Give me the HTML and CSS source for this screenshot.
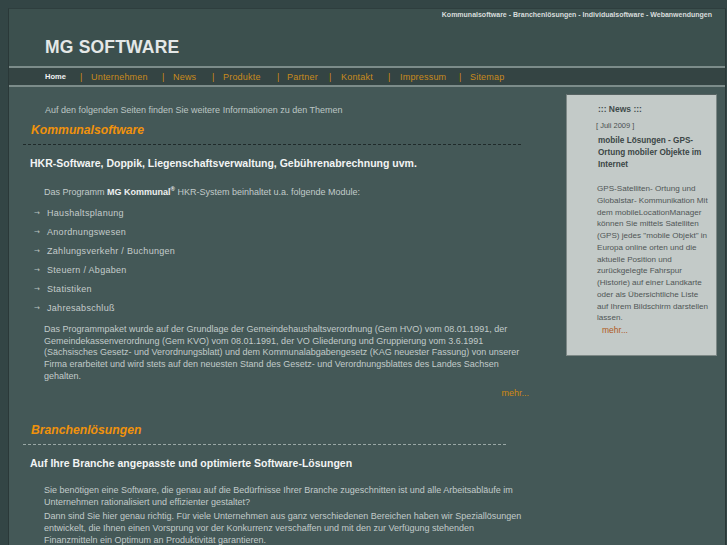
FILE: index.html
```html
<!DOCTYPE html>
<html lang="de">
<head>
<meta charset="utf-8">
<title>MG Software</title>
<link rel="stylesheet" href="styles.css">
</head>
<body>
<div class="page">
  <header class="header">
    <div class="tagline">Kommunalsoftware - Branchenlösungen - Individualsoftware - Webanwendungen</div>
    <div class="logo">MG SOFTWARE</div>
  </header>
  <nav class="nav">
    <span class="home">Home</span>
    <span class="item i1"><span class="sep">|</span><a>Unternehmen</a></span>
    <span class="item i2"><span class="sep">|</span><a>News</a></span>
    <span class="item i3"><span class="sep">|</span><a>Produkte</a></span>
    <span class="item i4"><span class="sep">|</span><a>Partner</a></span>
    <span class="item i5"><span class="sep">|</span><a>Kontakt</a></span>
    <span class="item i6"><span class="sep">|</span><a>Impressum</a></span>
    <span class="item i7"><span class="sep">|</span><a>Sitemap</a></span>
  </nav>
  <div class="main">
    <div class="content">
      <p class="intro">Auf den folgenden Seiten finden Sie weitere Informationen zu den Themen</p>

      <h2 class="section-title">Kommunalsoftware</h2>
      <div class="rule dark"></div>
      <h3 class="subtitle">HKR-Software, Doppik, Liegenschaftsverwaltung, Gebührenabrechnung uvm.</h3>
      <p class="text lead">Das Programm <b>MG Kommunal<sup>®</sup></b> HKR-System beinhaltet u.a. folgende Module:</p>
      <ul class="list">
        <li>Haushaltsplanung</li>
        <li>Anordnungswesen</li>
        <li>Zahlungsverkehr / Buchungen</li>
        <li>Steuern / Abgaben</li>
        <li>Statistiken</li>
        <li>Jahresabschluß</li>
      </ul>
      <p class="text after-list">Das Programmpaket wurde auf der Grundlage der Gemeindehaushaltsverordnung (Gem HVO) vom 08.01.1991, der Gemeindekassenverordnung (Gem KVO) vom 08.01.1991, der VO Gliederung und Gruppierung vom 3.6.1991 (Sächsisches Gesetz- und Verordnungsblatt) und dem Kommunalabgabengesetz (KAG neuester Fassung) von unserer Firma erarbeitet und wird stets auf den neuesten Stand des Gesetz- und Verordnungsblattes des Landes Sachsen gehalten.</p>
      <div class="more"><a>mehr...</a></div>

      <h2 class="section-title second">Branchenlösungen</h2>
      <div class="rule light"></div>
      <h3 class="subtitle">Auf Ihre Branche angepasste und optimierte Software-Lösungen</h3>
      <p class="text lead2">Sie benötigen eine Software, die genau auf die Bedürfnisse Ihrer Branche zugeschnitten ist und alle Arbeitsabläufe im Unternehmen rationalisiert und effizienter gestaltet?</p>
      <p class="text para">Dann sind Sie hier genau richtig. Für viele Unternehmen aus ganz verschiedenen Bereichen haben wir Speziallösungen entwickelt, die Ihnen einen Vorsprung vor der Konkurrenz verschaffen und mit den zur Verfügung stehenden Finanzmitteln ein Optimum an Produktivität garantieren.</p>
    </div>
    <aside class="sidebar">
      <div class="news-head">::: News :::</div>
      <div class="news-date">[ Juli 2009 ]</div>
      <div class="news-title">mobile Lösungen - GPS-Ortung mobiler Objekte im Internet</div>
      <p class="news-text">GPS-Satelliten- Ortung und Globalstar- Kommunikation Mit dem mobileLocationManager können Sie mittels Satelliten (GPS) jedes "mobile Objekt" in Europa online orten und die aktuelle Position und zurückgelegte Fahrspur (Historie) auf einer Landkarte oder als Übersichtliche Liste auf Ihrem Bildschirm darstellen lassen.</p>
      <div class="news-more"><a>mehr...</a></div>
    </aside>
  </div>
</div>
</body>
</html>
```

FILE: styles.css
```css
html, body {
  margin: 0;
  padding: 0;
}
body {
  background: #334545;
  padding: 8px 0 0 8px;
  font-family: "Liberation Sans", Arial, Helvetica, sans-serif;
  color: #c4cccb;
}
.page {
  width: 716px;
  border-left: 1px solid #2a3838;
  border-right: 1px solid #2a3838;
  border-top: 1px solid #2e3e3e;
  background: #445857;
  min-height: 600px;
}
.header {
  background: #3c504e;
  height: 57px;
}
.tagline {
  text-align: right;
  font-size: 7px;
  font-weight: bold;
  color: #d8dddc;
  padding: 2px 13px 0 0;
}
.logo {
  padding: 19px 0 0 36px;
  font-size: 17.5px;
  font-weight: bold;
  color: #e4e8e7;
  letter-spacing: 0.2px;
}
.nav {
  background: #344443;
  border-top: 2px solid #7c8c8a;
  border-bottom: 2px solid #7c8c8a;
  height: 17px;
  line-height: 18px;
  padding-left: 36px;
  font-size: 9px;
  display: flex;
  align-items: center;
}
.nav .home {
  color: #f2f2f2;
  font-size: 7.5px;
  font-weight: bold;
  width: 35px;
}
.nav .item {
  display: flex;
}
.nav .i1 { width: 82px; }
.nav .i2 { width: 50px; }
.nav .i3 { width: 65px; }
.nav .i4 { width: 52px; }
.nav .i5 { width: 59px; }
.nav .i6 { width: 71px; }
.nav .sep {
  color: #d08a12;
  width: 11px;
}
.nav .i4 .sep {
  width: 10px;
}
.nav .i5 .sep, .nav .i6 .sep {
  width: 12px;
}
.nav a {
  color: #c98a1c;
  letter-spacing: 0.2px;
}
.main {
  display: flex;
  align-items: flex-start;
}
.content {
  width: 506px;
  margin-left: 14px;
  padding-top: 18px;
}
.intro {
  margin: 0 0 0 22px;
  font-size: 9px;
  color: #bcc6c4;
}
.section-title {
  margin: 7px 0 0 8px;
  font-size: 12.2px;
  font-style: italic;
  font-weight: bold;
  color: #f0920c;
  line-height: 16px;
}
.section-title.second {
  margin-top: 24px;
}
.rule {
  margin-top: 6px;
  height: 0;
  width: 498px;
}
.rule.dark {
  border-top: 1px dashed #1f2a2a;
}
.rule.light {
  border-top: 1px dashed #9aa8a6;
  width: 483px;
}
.subtitle {
  margin: 11px 0 0 7px;
  font-size: 10.5px;
  font-weight: bold;
  color: #f2f4f4;
  line-height: 14px;
}
.text {
  margin: 0 0 0 21px;
  font-size: 9px;
  line-height: 11.8px;
  color: #c2cbca;
}
.lead {
  margin-top: 17px;
}
.lead2 {
  margin-top: 15px;
}
.text b {
  color: #eef0f0;
}
.text sup {
  font-size: 6px;
  vertical-align: 4px;
  line-height: 0;
}
.list {
  list-style: none;
  margin: 5px 0 0 0;
  padding: 0;
}
.list li {
  position: relative;
  padding-left: 24px;
  font-size: 9px;
  height: 19px;
  line-height: 19px;
  color: #c4cccb;
  letter-spacing: 0.3px;
}
.list li::before {
  content: "\2192";
  position: absolute;
  left: 11px;
  top: 0;
  font-family: "DejaVu Sans", sans-serif;
  font-size: 7px;
  color: #b8c2c0;
}
.after-list {
  margin-top: 6px;
}
.para {
  margin-top: 3px;
}
.more {
  text-align: right;
  font-size: 9px;
  margin-top: 5px;
}
.more a {
  color: #d08a12;
}
.sidebar {
  width: 151px;
  margin: 7px 0 0 37px;
  background: #c3cac8;
  border: 1px solid #7d8886;
  border-top-color: #566262;
  padding: 9px 7px 19px 30px;
  box-sizing: border-box;
  color: #444;
}
.news-head {
  font-size: 8.5px;
  font-weight: bold;
  color: #3f4b4b;
  margin-left: 1px;
}
.news-date {
  margin-top: 7px;
  margin-left: -1px;
  font-size: 7.5px;
  color: #4a5050;
}
.news-title {
  margin: 5px 0 0 1px;
  font-size: 8.2px;
  font-weight: bold;
  line-height: 12px;
  color: #3b4646;
}
.news-text {
  margin: 12px 0 0 0;
  font-size: 8.1px;
  line-height: 11.75px;
  color: #505656;
}
.news-more {
  margin-left: 5px;
  font-size: 8.5px;
  line-height: 12px;
}
.news-more a {
  color: #b05a24;
}
```
